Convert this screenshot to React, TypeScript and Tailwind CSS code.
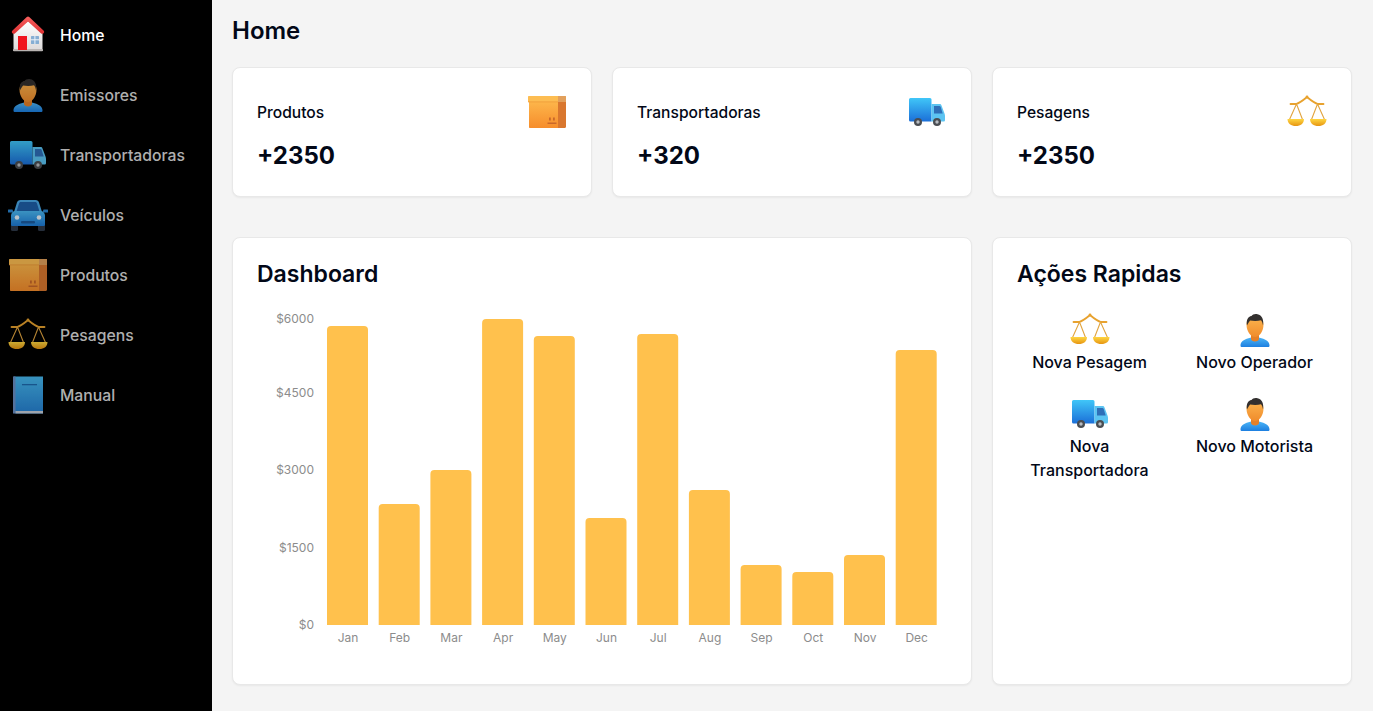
const font = { fontFamily: "Inter, 'Noto Sans', sans-serif" };

// Hand drawn emoji style icons, all on a 40x40 box
function HomeIcon() {
  return (
    <svg viewBox="0 0 40 40" className="w-10 h-10">
      <defs>
        <linearGradient id="hw" x1="0" y1="0" x2="0" y2="1">
          <stop offset="0" stopColor="#ffffff" />
          <stop offset="1" stopColor="#dcd9d9" />
        </linearGradient>
        <linearGradient id="hr" x1="0" y1="0" x2="0" y2="1">
          <stop offset="0" stopColor="#f8605e" />
          <stop offset="1" stopColor="#dc2f31" />
        </linearGradient>
      </defs>
      <path d="M5.500 17 20 6l14.500 11v19h-29z" fill="url(#hw)" />
      <rect x="5" y="34" width="30" height="2.200" rx="1" fill="#b9b4b2" />
      <path d="M18.800 2a1.800 1.800 0 0 1 2.400 0l14.300 13.500c1.400 1.400.3 3.300-1.200 3.300-.6 0-1-.2-1.400-.6L20 6.500 7.100 18.200c-.4.400-.8.600-1.400.6-1.500 0-2.600-1.900-1.200-3.300z" fill="url(#hr)" />
      <rect x="10" y="21" width="9" height="14" fill="#f0141e" />
      <rect x="23" y="21" width="8" height="8" rx=".5" fill="#86aed3" />
      <path d="M23 24.800h8M26.900 21v8" stroke="#eef4fa" strokeWidth="1" />
    </svg>
  );
}

function PersonIcon() {
  return (
    <svg viewBox="0 0 40 40" className="w-10 h-10">
      <defs>
        <linearGradient id="pb" x1="0" y1="0" x2="0" y2="1">
          <stop offset="0" stopColor="#4cb6f7" />
          <stop offset="1" stopColor="#1d7fe0" />
        </linearGradient>
        <linearGradient id="ps" x1="0" y1="0" x2="0" y2="1">
          <stop offset="0" stopColor="#fdb750" />
          <stop offset="1" stopColor="#f08c2c" />
        </linearGradient>
      </defs>
      <path d="M5.500 35.500c0-3.500 3-6 8-7.300l3.500-1h6l3.500 1c5 1.300 8 3.800 8 7.300 0 1-.5 1.500-1.500 1.500h-26c-1 0-1.500-.5-1.500-1.500z" fill="url(#pb)" />
      <path d="M16 24h8v5c0 1.500-2 2.500-4 2.500s-4-1-4-2.500z" fill="#e58028" />
      <path d="M11.500 14.500c0-5 3.500-9 8.500-9s8.500 4 8.500 9c0 6.500-4 12.500-8.500 12.500s-8.500-6-8.500-12.500z" fill="url(#ps)" />
      <path d="M12 15.500C11 10 13 6.500 16.500 6c1-1.500 3-2.300 6-1.800 4.500.8 6.500 5.500 5.500 11.300-.4-2.500-1-4-2-5.200-3 .9-7.500.9-10.800.3-1.200 1.200-2.200 2.900-3.200 4.900z" fill="#33302f" />
    </svg>
  );
}

function TruckIcon() {
  return (
    <svg viewBox="0 0 40 40" className="w-10 h-10">
      <defs>
        <linearGradient id="tb" x1="0" y1="0" x2="0" y2="1">
          <stop offset="0" stopColor="#40c6f8" />
          <stop offset="1" stopColor="#1b6fd8" />
        </linearGradient>
      </defs>
      <path d="M2 7.500A1.500 1.500 0 0 1 3.500 6h19.500a1.500 1.500 0 0 1 1.500 1.500V29.500H3.500A1.500 1.500 0 0 1 2 28z" fill="url(#tb)" />
      <path d="M24.500 12h8c1 0 1.600.4 2 1.400l3 8c.3.8.5 1.600.5 2.600v4c0 1-.6 1.500-1.500 1.500h-12z" fill="#5cc4f2" />
      <path d="M27 14h5.500c.6 0 1 .3 1.200 1l2 6.500H27z" fill="#2f6fb8" />
      <circle cx="11" cy="30" r="4" fill="#4a4d52" />
      <circle cx="11" cy="30" r="1.700" fill="#b8bcc2" />
      <circle cx="30" cy="30" r="4" fill="#4a4d52" />
      <circle cx="30" cy="30" r="1.700" fill="#b8bcc2" />
    </svg>
  );
}

function CarIcon() {
  return (
    <svg viewBox="0 0 40 40" className="w-10 h-10">
      <defs>
        <linearGradient id="cb" x1="0" y1="0" x2="0" y2="1">
          <stop offset="0" stopColor="#4ab8f2" />
          <stop offset="1" stopColor="#1c7ad6" />
        </linearGradient>
      </defs>
      <rect x="3" y="27" width="7" height="9" rx="1.500" fill="#2f3a4a" />
      <rect x="30" y="27" width="7" height="9" rx="1.500" fill="#2f3a4a" />
      <path d="M6 17 9 7.500C9.500 6 10.500 5 12.500 5h15c2 0 3 1 3.500 2.500L34 17z" fill="#4aa8e6" />
      <path d="M8.500 16.500 11 8.500c.3-1 .8-1.500 2-1.500h14c1.200 0 1.700.5 2 1.500l2.500 8z" fill="#1f5fa8" />
      <path d="M.5 14.500h4l1 3h-4.500a1.500 1.500 0 0 1-.5-3zM39.500 14.500h-4l-1 3h4.500a1.500 1.500 0 0 0 .5-3z" fill="#2a85d0" />
      <path d="M3 21c0-3 2-5 5-5h24c3 0 5 2 5 5v8.500c0 1-.6 1.500-1.500 1.500h-31c-.9 0-1.500-.5-1.500-1.500z" fill="url(#cb)" />
      <circle cx="9" cy="22.500" r="2.300" fill="#e8f3fb" />
      <circle cx="31" cy="22.500" r="2.300" fill="#e8f3fb" />
      <rect x="13" y="26" width="14" height="2.500" rx="1" fill="#1b5a9f" />
    </svg>
  );
}

function BoxIcon() {
  return (
    <svg viewBox="0 0 40 40" className="w-10 h-10">
      <defs>
        <linearGradient id="bf" x1="0" y1="0" x2="0" y2="1">
          <stop offset="0" stopColor="#fdb54a" />
          <stop offset="1" stopColor="#f68d2c" />
        </linearGradient>
      </defs>
      <path d="M2 10h36v25c0 .6-.4 1-1 1H3c-.6 0-1-.4-1-1z" fill="url(#bf)" />
      <path d="M31 10h8v24.800c0 .7-.5 1.200-1.200 1.200H31z" fill="#d9772f" />
      <path d="M2 4h36c.6 0 1 .4 1 1v5H1V5c0-.6.4-1 1-1z" fill="#fdbd52" />
      <path d="M31 4h7c.6 0 1 .4 1 1v5h-8z" fill="#e2a05c" />
      <rect x="1" y="9.500" width="30" height=".8" fill="#ef9a36" />
      <path d="M22 25.500h1.800v3H22zM26 25.500h1.800v3H26zM20.500 30.500h9V32h-9z" fill="#c9682a" />
    </svg>
  );
}

function ScaleIcon() {
  return (
    <svg viewBox="0 0 40 40" className="w-10 h-10">
      <defs>
        <linearGradient id="sg" x1="0" y1="0" x2="0" y2="1">
          <stop offset="0" stopColor="#ffd640" />
          <stop offset="1" stopColor="#e69512" />
        </linearGradient>
      </defs>
      <path d="M3.500 12H9C13 11 17 7.500 20 5c3 2.500 7 6 11 7h5.500" fill="none" stroke="#e8a22e" strokeWidth="1.800" strokeLinecap="round" strokeLinejoin="round" />
      <path d="M9.500 12 2.500 27.500M9.500 12 15.500 27.500M30.500 12 24.500 27.500M30.500 12 37.500 27.500" fill="none" stroke="#e2a540" strokeWidth="1.100" />
      <path d="M.5 27h16.500c0 4.500-3.500 7-8.200 7S.5 31.500.5 27z" fill="url(#sg)" />
      <path d="M23 27h16.500c0 4.500-3.500 7-8.200 7S23 31.500 23 27z" fill="url(#sg)" />
      <circle cx="20" cy="5" r="1.400" fill="#e8a22e" />
    </svg>
  );
}

function BookIcon() {
  return (
    <svg viewBox="0 0 40 40" className="w-10 h-10">
      <defs>
        <linearGradient id="mb" x1="0" y1="0" x2="0" y2="1">
          <stop offset="0" stopColor="#46b8ee" />
          <stop offset="1" stopColor="#2580d2" />
        </linearGradient>
      </defs>
      <path d="M5 3c0-1 .7-1.500 1.500-1.500H35V38.500H8c-1.800 0-3-1.200-3-3z" fill="url(#mb)" />
      <rect x="5" y="1.500" width="2.500" height="37" fill="#6a8ec4" />
      <rect x="7.500" y="36" width="27.500" height="2.500" fill="#c6ccd6" />
      <rect x="14" y="9" width="15" height="1.300" fill="#1f6bb0" />
    </svg>
  );
}

const nav = [
  { label: "Home", Icon: HomeIcon, active: true },
  { label: "Emissores", Icon: PersonIcon },
  { label: "Transportadoras", Icon: TruckIcon },
  { label: "Veículos", Icon: CarIcon },
  { label: "Produtos", Icon: BoxIcon },
  { label: "Pesagens", Icon: ScaleIcon },
  { label: "Manual", Icon: BookIcon },
];

const stats = [
  { label: "Produtos", value: "+2350", Icon: BoxIcon },
  { label: "Transportadoras", value: "+320", Icon: TruckIcon },
  { label: "Pesagens", value: "+2350", Icon: ScaleIcon },
];

const actions = [
  { label: "Nova Pesagem", Icon: ScaleIcon },
  { label: "Novo Operador", Icon: PersonIcon },
  { label: "Nova Transportadora", Icon: TruckIcon },
  { label: "Novo Motorista", Icon: PersonIcon },
];

const months = [
  { m: "Jan", top: 326 },
  { m: "Feb", top: 504 },
  { m: "Mar", top: 470 },
  { m: "Apr", top: 319 },
  { m: "May", top: 336 },
  { m: "Jun", top: 518 },
  { m: "Jul", top: 334 },
  { m: "Aug", top: 490 },
  { m: "Sep", top: 565 },
  { m: "Oct", top: 572 },
  { m: "Nov", top: 555 },
  { m: "Dec", top: 350 },
];

const ticks = [
  { t: "$6000", y: 318 },
  { t: "$4500", y: 392 },
  { t: "$3000", y: 469 },
  { t: "$1500", y: 547 },
  { t: "$0", y: 624 },
];

function BarChart() {
  const base = 625;
  return (
    <svg viewBox="232 300 740 360" className="block w-[740px] h-[360px] -ml-[25px]">
      {ticks.map((t) => (
        <text key={t.t} x={314} y={t.y + 4.5} textAnchor="end" fontSize="12" fill="#8c8c8c">
          {t.t}
        </text>
      ))}
      {months.map((b, i) => {
        const x = 327 + i * 51.7;
        return (
          <g key={b.m}>
            <path
              d={`M${x} ${base}V${b.top + 4}a4 4 0 0 1 4-4h33a4 4 0 0 1 4 4V${base}z`}
              fill="#ffc14d"
            />
            <text x={x + 21} y={642} textAnchor="middle" fontSize="12" fill="#8c8c8c">
              {b.m}
            </text>
          </g>
        );
      })}
    </svg>
  );
}

export default function App() {
  return (
    <div className="flex h-[711px] overflow-hidden bg-[#f4f4f4]" style={font}>
      <aside className="w-[212px] shrink-0 bg-black pt-[5px] pl-2">
        {nav.map(({ label, Icon, active }) => (
          <div key={label} className="flex items-center gap-3 h-[60px]">
            <div className={active ? "" : "opacity-80"}>
              <Icon />
            </div>
            <span className={`mt-[2px] text-[15.75px] leading-6 font-medium ${active ? "text-white" : "text-white/70"}`}>{label}</span>
          </div>
        ))}
      </aside>

      <main className="flex-1 min-w-0 pl-5 pt-[15px]">
        <h1 className="text-2xl font-semibold text-[#020817] mb-5">Home</h1>

        <div className="grid grid-cols-3 gap-5 w-[1120px] mb-10">
          {stats.map(({ label, value, Icon }) => (
            <div key={label} className="h-[130px] bg-white rounded-lg border border-[#e8e8e8] shadow-xs px-6 pt-6">
              <div className="flex items-center justify-between">
                <span className="mt-[2px] text-[15.6px] leading-6 font-medium text-[#020817]">{label}</span>
                <Icon />
              </div>
              <div className="mt-2 text-2xl font-bold text-[#020817]">{value}</div>
            </div>
          ))}
        </div>

        <div className="grid grid-cols-3 gap-5 w-[1120px]">
          <div className="col-span-2 h-[448px] bg-white rounded-lg border border-[#e8e8e8] shadow-xs px-6 pt-5">
            <h2 className="text-[23px] leading-8 font-semibold text-[#020817] mb-[10px]">Dashboard</h2>
            <BarChart />
          </div>

          <div className="h-[448px] bg-white rounded-lg border border-[#e8e8e8] shadow-xs px-6 pt-5">
            <h2 className="text-[23px] leading-8 font-semibold text-[#020817] mb-5">Ações Rapidas</h2>
            <div className="grid grid-cols-2 gap-x-5 gap-y-5">
              {actions.map(({ label, Icon }) => (
                <div key={label} className="flex flex-col items-center text-center">
                  <Icon />
                  <span className="text-base font-medium text-[#020817]">{label}</span>
                </div>
              ))}
            </div>
          </div>
        </div>
      </main>
    </div>
  );
}
